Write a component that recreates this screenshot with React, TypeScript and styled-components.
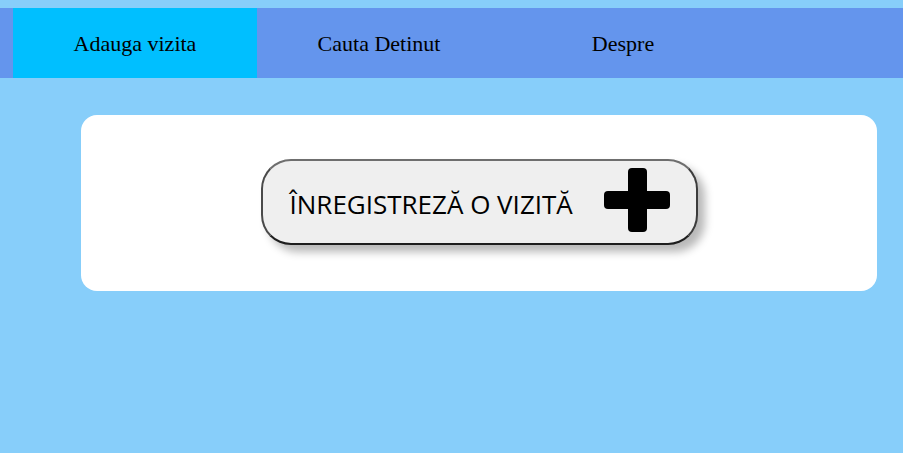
import React from "react";
import styled, { createGlobalStyle } from "styled-components";

const Global = createGlobalStyle`
  html, body { background: #87cefa; }
  body { margin: 8px 0 0; font-family: "Liberation Serif", "Times New Roman", serif; }
`;

const Nav = styled.nav`
  display: flex;
  padding-left: 13px;
  height: 70px;
  background: #6495ed;
`;

const Tab = styled.a<{ $active?: boolean }>`
  flex: 0 0 244px;
  display: flex;
  align-items: center;
  justify-content: center;
  padding-top: 2px;
  font-size: 22px;
  color: #000;
  text-decoration: none;
  background: ${(p) => (p.$active ? "#00bfff" : "transparent")};
`;

const Main = styled.main`
  padding: 37px 26px 0 81px;
`;

const Card = styled.section`
  background: #fff;
  border-radius: 16px;
  height: 176px;
  display: flex;
  align-items: center;
  justify-content: center;
`;

const AddButton = styled.button`
  box-sizing: border-box;
  width: 437px;
  height: 86px;
  margin-bottom: 2px;
  display: flex;
  align-items: center;
  justify-content: space-between;
  padding: 0 26px 0 27px;
  background: #efefef;
  border: 2px solid;
  border-color: #6e6e6e #3c3c3c #1e1e1e #4a4a4a;
  border-radius: 30px;
  box-shadow: 7px 7px 8px rgba(0, 0, 0, 0.28);
  font-family: "Open Sans", "Noto Sans", sans-serif;
  font-size: 26px;
  color: #000;
  cursor: pointer;
`;

const Label = styled.span`
  padding-top: 4px;
`;

const PlusSvg = styled.svg`
  margin: 0 0 5px 0;
  flex: none;
`;

const PlusIcon = () => (
  <PlusSvg width="66" height="64" viewBox="0 0 66 64" aria-hidden>
    <rect x="24" y="0" width="19" height="64" rx="4" fill="#000" />
    <rect x="0" y="23" width="66" height="18" rx="4" fill="#000" />
  </PlusSvg>
);

export default function App() {
  return (
    <>
      <Global />
      <Nav>
        <Tab $active href="#">Adauga vizita</Tab>
        <Tab href="#">Cauta Detinut</Tab>
        <Tab href="#">Despre</Tab>
      </Nav>
      <Main>
        <Card>
          <AddButton>
            <Label>ÎNREGISTREZĂ O VIZITĂ</Label>
            <PlusIcon />
          </AddButton>
        </Card>
      </Main>
    </>
  );
}
